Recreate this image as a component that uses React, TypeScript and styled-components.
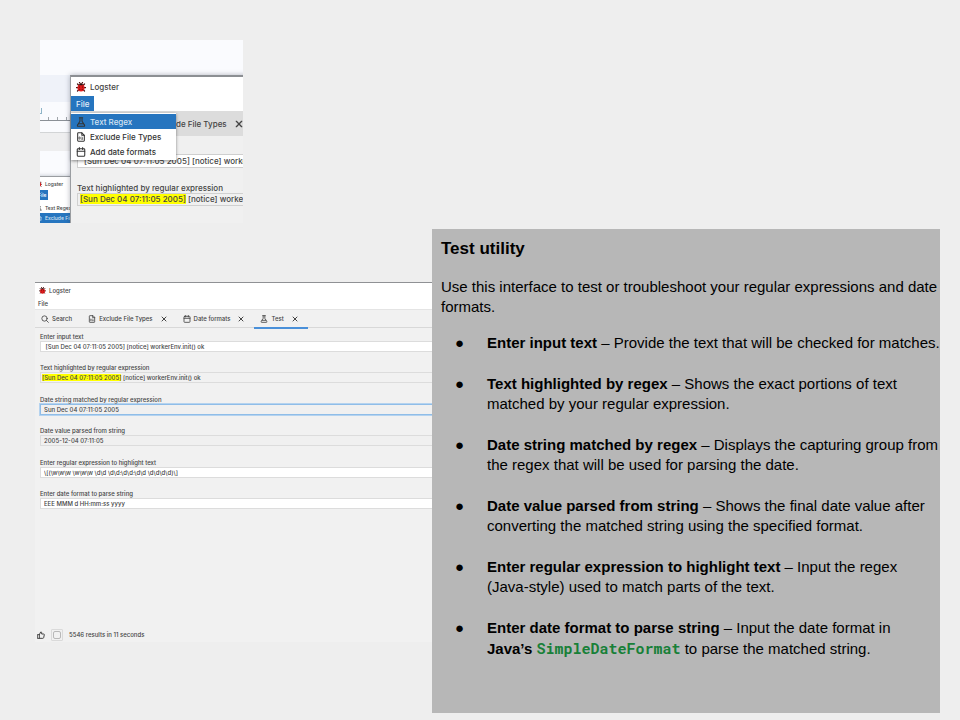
import React from 'react';
import styled, { createGlobalStyle, css } from 'styled-components';

const GlobalStyle = createGlobalStyle`
  *, *::before, *::after { box-sizing: border-box; }
  body { margin: 0; background: #eeeeee; }
  button, input { font: inherit; color: inherit; }
`;

const Page = styled.main`
  display: grid;
  grid-template-columns: 432fr 508fr;
  min-height: 100vh;
  padding-right: 20px;
  background: #eeeeee;
  color: #000;
  font-family: 'Liberation Sans', Arial, sans-serif;
`;

const Shots = styled.div`
  min-width: 0;
  padding-top: 40px;
  font-family: Inter, 'Liberation Sans', sans-serif;
  font-weight: 500;
  color: #444;
`;

/* ---------- icons ---------- */

const Svg = styled.svg<{ $size: number }>`
  display: block;
  flex: none;
  width: ${(p) => p.$size}px;
  height: ${(p) => p.$size}px;
  fill: none;
  stroke: currentColor;
  stroke-width: 2.5;
  stroke-linecap: round;
  stroke-linejoin: round;
`;

type IconProps = { size: number };

const BugIcon = ({ size }: IconProps) => (
  <Svg $size={size} viewBox="0 0 20 20" aria-hidden="true">
    <path
      d="M3 4l3 3M17 4l-3 3M1 11h4M19 11h-4M3 18l3-3M17 18l-3-3M7 1l2 3M13 1l-2 3"
      stroke="#4a1616"
      strokeWidth="2.5"
    />
    <ellipse cx="10" cy="11.500" rx="7" ry="7.500" fill="#e01b1b" stroke="none" />
    <path d="M5.500 6.500C6 3 14 3 14.500 6.500z" fill="#251313" stroke="none" />
    <g fill="#5a0d0d" stroke="none">
      <circle cx="7" cy="10" r="1.200" />
      <circle cx="13" cy="10" r="1.200" />
      <circle cx="7.500" cy="14.500" r="1.200" />
      <circle cx="12.500" cy="14.500" r="1.200" />
    </g>
  </Svg>
);

const FlaskIcon = ({ size }: IconProps) => (
  <Svg $size={size} viewBox="0 0 24 24" aria-hidden="true">
    <path d="M8 2h8M9.500 2v8L3.500 19.500Q2.500 22 5 22h14q2.500 0 1.500-2.500L14.500 10V2" />
    <path d="M6.500 16h11" />
  </Svg>
);

const FileIcon = ({ size }: IconProps) => (
  <Svg $size={size} viewBox="0 0 24 24" aria-hidden="true">
    <path d="M14 2H5.500Q4 2 4 3.500v17Q4 22 5.500 22h13q1.500 0 1.500-1.500V8z" />
    <path d="M14 2v6h6" />
    <path d="M8 12h2v5H8zM14 12h1v5M13 17h3" strokeWidth="1.500" />
  </Svg>
);

const CalendarIcon = ({ size }: IconProps) => (
  <Svg $size={size} viewBox="0 0 24 24" aria-hidden="true">
    <rect x="3" y="4" width="18" height="18" rx="2" />
    <path d="M3 10h18M8 1.500V6M16 1.500V6" />
  </Svg>
);

const SearchIcon = ({ size }: IconProps) => (
  <Svg $size={size} viewBox="0 0 24 24" aria-hidden="true">
    <circle cx="10.500" cy="10.500" r="8" />
    <path d="M16.500 16.500L22 22" />
  </Svg>
);

const CloseIcon = ({ size }: IconProps) => (
  <Svg $size={size} viewBox="0 0 24 24" aria-hidden="true">
    <path d="M4 4l16 16M20 4L4 20" strokeWidth="4" />
  </Svg>
);

const ThumbIcon = ({ size }: IconProps) => (
  <Svg $size={size} viewBox="0 0 24 24" aria-hidden="true">
    <path
      d="M2 11h5v11H2zM7 11l4-8q3-1 3 2v4h6q2 0 2 2l-2 9q-.500 2-2.500 2H7"
      strokeWidth="3"
    />
  </Svg>
);

/* ---------- desktop crop with the open File menu ---------- */

const Desktop = styled.section`
  position: relative;
  width: 203px;
  height: 183px;
  margin-left: 40px;
  overflow: hidden;
  background: #fafbfe;
  font-size: 8px;
  line-height: 10px;
`;

const DesktopBand = styled.div<{ $height: number; $color: string; $line?: boolean }>`
  height: ${(p) => p.$height}px;
  border-bottom: ${(p) => (p.$line ? '1px solid #d2d4d6' : '0')};
  background: ${(p) => p.$color};
`;

const Ruler = styled.div`
  display: flex;
  align-items: flex-end;
  height: 19px;
  border-bottom: 1px solid #8b9096;
  background: #fafbfe;
`;

const RulerSvg = styled.svg`
  display: block;
  width: 30px;
  height: 12px;
  stroke: #a0a5aa;
  fill: none;
`;

const FrontWindow = styled.div`
  position: absolute;
  top: 35px;
  left: 30px;
  width: 240px;
  height: 170px;
  border: 1px solid #9a9da1;
  border-top: 2px solid #8c8f93;
  background: #f0f0f0;
  box-shadow: 0 0 5px rgba(40, 50, 70, 0.35);
`;

const BackWindow = styled.div`
  position: absolute;
  top: 136px;
  left: -12px;
  width: 60px;
  height: 60px;
  border-top: 1px solid #9a9da1;
  background: #fff;
  box-shadow: 0 0 4px rgba(40, 50, 70, 0.3);
  font-size: 5px;
  line-height: 10px;
`;

const BackRow = styled.div<{ $active?: boolean }>`
  display: flex;
  align-items: center;
  gap: 3px;
  height: 10px;
  padding-left: 9px;
  white-space: nowrap;
  ${(p) => p.$active && css`
    background: #2675bf;
    color: #d5e4f3;
  `}
`;

const BackTitle = styled(BackRow)`
  height: 13px;
  padding-left: 8px;
`;

const BackMenu = styled.div`
  width: 20px;
  height: 10px;
  margin-bottom: 3px;
  padding-left: 10px;
  background: #2675bf;
  color: #fff;
`;

const TitleBar = styled.header<{ $large?: boolean }>`
  display: flex;
  align-items: center;
  gap: ${(p) => (p.$large ? 4 : 3)}px;
  height: ${(p) => (p.$large ? 19 : 15)}px;
  padding-left: ${(p) => (p.$large ? 5 : 4)}px;
  background: #fff;
`;

const MenuStrip = styled.div<{ $height: number }>`
  display: flex;
  align-items: stretch;
  height: ${(p) => p.$height}px;
  background: #fff;
`;

const MenuTitle = styled.button<{ $open?: boolean }>`
  padding: 0 ${(p) => (p.$open ? 5 : 3)}px;
  border: 0;
  background: ${(p) => (p.$open ? '#2675bf' : 'transparent')};
  color: ${(p) => (p.$open ? '#e2edf8' : 'inherit')};
`;

const CropTabs = styled.div`
  display: flex;
  align-items: center;
  gap: 8px;
  height: 25px;
  padding-left: 105px;
  background: #dcdcdc;
  white-space: nowrap;
`;

const CropTab = styled.button`
  padding: 0;
  border: 0;
  background: none;
`;

const Menu = styled.div`
  position: absolute;
  top: 36px;
  left: 0;
  width: 105px;
  padding: 1px 0;
  background: #fff;
  box-shadow: 0 1px 3px rgba(0, 0, 0, 0.45);
`;

const MenuItem = styled.button<{ $active?: boolean }>`
  display: flex;
  align-items: center;
  gap: 4px;
  width: 100%;
  height: 15px;
  padding: 0 5px;
  border: 0;
  background: ${(p) => (p.$active ? '#2675bf' : '#fff')};
  color: #333;
  text-align: left;
  white-space: nowrap;
`;

const MenuText = styled.span<{ $active?: boolean }>`
  color: ${(p) => (p.$active ? '#d3e3f3' : 'inherit')};
`;

const CropBody = styled.div`
  padding: 18px 0 0 6px;
`;

const CropInput = styled.input`
  display: block;
  width: 100%;
  height: 14px;
  padding: 0 6px;
  border: 1px solid #cfcfcf;
  background: #fff;
`;

const CropLabel = styled.div`
  margin-top: 15px;
  white-space: nowrap;
`;

const CropResult = styled.div`
  height: 13px;
  padding: 0 2px;
  border: 1px solid #d0d0d0;
  line-height: 11px;
  white-space: nowrap;
`;

const Mark = styled.mark`
  background: #ffff00;
  color: inherit;
`;

/* ---------- main application window ---------- */

const AppWindow = styled.section`
  display: flex;
  flex-direction: column;
  height: 360px;
  margin: 59px 0 0 35px;
  border-top: 1px solid #8f9194;
  background: #f1f1f1;
  font-size: 6px;
  line-height: 8px;
`;

const Tabs = styled.nav`
  display: flex;
  height: 19px;
  border-top: 1px solid #e4e4e4;
  border-bottom: 1px solid #d8d8d8;
`;

const Tab = styled.div<{ $active?: boolean }>`
  display: flex;
  align-items: center;
  gap: 8px;
  height: 19px;
  padding: 0 10px 0 6px;
  border-bottom: 2px solid ${(p) => (p.$active ? '#4a90d9' : 'transparent')};
`;

const TabButton = styled.button`
  display: flex;
  align-items: center;
  gap: 3px;
  padding: 0;
  border: 0;
  background: none;
  white-space: nowrap;
`;

const Fields = styled.form`
  display: flex;
  flex-direction: column;
  justify-content: space-between;
  height: 176px;
  margin-top: 5px;
  padding-left: 5px;
`;

const Field = styled.div``;

const FieldLabel = styled.label`
  display: block;
  line-height: 8px;
`;

const fieldBox = css`
  display: block;
  width: 100%;
  height: 11px;
  border: 1px solid #dcdcdc;
  border-right: 0;
  line-height: 9px;
  white-space: nowrap;
`;

const FieldInput = styled.input<{ $tone: 'edit' | 'read' | 'focus' }>`
  ${fieldBox}
  padding: 0 3px;
  outline: 0;
  background: ${(p) => (p.$tone === 'edit' ? '#fff' : '#f0f0f0')};
  ${(p) => p.$tone === 'focus' && css`
    border-color: #8fbde8;
    box-shadow: 0 0 0 1px #b5d3ef;
  `}
`;

const FieldResult = styled.output`
  ${fieldBox}
  padding: 0 1px;
`;

const StatusBar = styled.footer`
  display: flex;
  align-items: center;
  gap: 6px;
  height: 15px;
  margin-top: auto;
  padding-left: 2px;
`;

const IconButton = styled.button`
  display: flex;
  padding: 0;
  border: 0;
  background: none;
`;

const StopButton = styled(IconButton)`
  padding: 1px;
  border: 1px solid #dadada;
  border-radius: 1px;
`;

const StopMark = styled.span`
  width: 8px;
  height: 8px;
  border: 1px solid #b8b8b8;
  border-radius: 2px;
`;

/* ---------- explanation panel ---------- */

const Panel = styled.article`
  min-width: 0;
  min-height: 484px;
  margin: 229px 0 7px;
  padding: 8px 0 8px 9px;
  background: #b7b7b7;
  font-size: 15px;
  line-height: 20px;
`;

const Heading = styled.h1`
  margin: 0 0 16px;
  font-size: 17px;
  line-height: 24px;
`;

const Intro = styled.p`
  margin: 0;
`;

const List = styled.ul`
  display: flex;
  flex-direction: column;
  gap: 21px;
  margin: 16px 0 0;
  padding: 0;
  list-style: none;
`;

const Item = styled.li`
  display: grid;
  grid-template-columns: 32px 1fr;
  padding-left: 14px;

  &::before {
    content: '●';
    font-size: 15px;
  }
`;

const Code = styled.code`
  color: #188038;
  font-family: 'Roboto Mono', 'Liberation Mono', monospace;
  font-size: 15px;
  font-weight: 700;
`;

const fields: { label: string; value: string; tone: 'edit' | 'read' | 'focus' | 'mark' }[] = [
  { label: 'Enter input text', value: ' [Sun Dec 04 07:11:05 2005] [notice] workerEnv.init() ok', tone: 'edit' },
  { label: 'Text highlighted by regular expression', value: '', tone: 'mark' },
  { label: 'Date string matched by regular expression', value: 'Sun Dec 04 07:11:05 2005', tone: 'focus' },
  { label: 'Date value parsed from string', value: '2005-12-04 07:11:05', tone: 'read' },
  {
    label: 'Enter regular expression to highlight text',
    value: '\\[(\\w\\w\\w \\w\\w\\w \\d\\d \\d\\d:\\d\\d:\\d\\d \\d\\d\\d\\d)\\]',
    tone: 'edit',
  },
  { label: 'Enter date format to parse string', value: 'EEE MMM d HH:mm:ss yyyy', tone: 'edit' },
];

const tabs = [
  { name: 'Search', Icon: SearchIcon, closable: false },
  { name: 'Exclude File Types', Icon: FileIcon, closable: true },
  { name: 'Date formats', Icon: CalendarIcon, closable: true },
  { name: 'Test', Icon: FlaskIcon, closable: true },
];

const menuItems = [
  { name: 'Text Regex', Icon: FlaskIcon },
  { name: 'Exclude File Types', Icon: FileIcon },
  { name: 'Add date formats', Icon: CalendarIcon },
];

const notes = [
  { term: 'Enter input text', text: 'Provide the text that will be checked for matches.' },
  {
    term: 'Text highlighted by regex',
    text: 'Shows the exact portions of text matched by your regular expression.',
  },
  {
    term: 'Date string matched by regex',
    text: 'Displays the capturing group from the regex that will be used for parsing the date.',
  },
  {
    term: 'Date value parsed from string',
    text: 'Shows the final date value after converting the matched string using the specified format.',
  },
  {
    term: 'Enter regular expression to highlight text',
    text: 'Input the regex (Java-style) used to match parts of the text.',
  },
];

const MenuShot = () => (
  <Desktop>
    <DesktopBand $height={35} $color="#fafbfe" />
    <DesktopBand $height={27} $color="#eff2f9" />
    <Ruler>
      <RulerSvg viewBox="0 0 30 12">
        <path d="M1.500 0v5M0 5.500h2" stroke="#8fb5c8" />
        <path d="M8.500 9v3M17.500 9v3M26.500 9v3" />
      </RulerSvg>
    </Ruler>
    <DesktopBand $height={12} $color="#fafbfe" $line />
    <DesktopBand $height={18} $color="#eeeeef" />
    <BackWindow>
      <BackTitle>
        <BugIcon size={6} />
        Logster
      </BackTitle>
      <BackMenu>File</BackMenu>
      <BackRow>
        <FlaskIcon size={5} />
        Text Regex
      </BackRow>
      <BackRow $active>
        <FileIcon size={5} />
        Exclude File
      </BackRow>
    </BackWindow>
    <FrontWindow>
      <TitleBar $large>
        <BugIcon size={10} />
        Logster
      </TitleBar>
      <MenuStrip $height={15}>
        <MenuTitle $open>File</MenuTitle>
      </MenuStrip>
      <CropTabs>
        <CropTab>de File Types</CropTab>
        <IconButton aria-label="Close tab">
          <CloseIcon size={8} />
        </IconButton>
      </CropTabs>
      <CropBody>
        <CropInput aria-label="Input text" defaultValue="[Sun Dec 04 07:11:05 2005] [notice] workerEnv.init() ok" />
        <CropLabel>Text highlighted by regular expression</CropLabel>
        <CropResult>
          <Mark>[Sun Dec 04 07:11:05 2005]</Mark> [notice] workerEnv.init() ok
        </CropResult>
      </CropBody>
      <Menu role="menu">
        {menuItems.map(({ name, Icon }, i) => (
          <MenuItem key={name} role="menuitem" $active={i === 0}>
            <Icon size={10} />
            <MenuText $active={i === 0}>{name}</MenuText>
          </MenuItem>
        ))}
      </Menu>
    </FrontWindow>
  </Desktop>
);

const LogsterWindow = () => (
  <AppWindow>
    <TitleBar>
      <BugIcon size={7} />
      Logster
    </TitleBar>
    <MenuStrip $height={11}>
      <MenuTitle>File</MenuTitle>
    </MenuStrip>
    <Tabs>
      {tabs.map(({ name, Icon, closable }) => (
        <Tab key={name} $active={name === 'Test'}>
          <TabButton>
            <Icon size={8} />
            {name}
          </TabButton>
          {closable && (
            <IconButton aria-label={`Close ${name}`}>
              <CloseIcon size={6} />
            </IconButton>
          )}
        </Tab>
      ))}
    </Tabs>
    <Fields>
      {fields.map(({ label, value, tone }, i) => (
        <Field key={label}>
          <FieldLabel htmlFor={`field-${i}`}>{label}</FieldLabel>
          {tone === 'mark' ? (
            <FieldResult id={`field-${i}`}>
              <Mark>[Sun Dec 04 07:11:05 2005]</Mark> [notice] workerEnv.init() ok
            </FieldResult>
          ) : (
            <FieldInput id={`field-${i}`} $tone={tone} defaultValue={value} readOnly={tone !== 'edit'} />
          )}
        </Field>
      ))}
    </Fields>
    <StatusBar>
      <IconButton aria-label="Status">
        <ThumbIcon size={8} />
      </IconButton>
      <StopButton aria-label="Stop">
        <StopMark />
      </StopButton>
      <span>5546 results in 11 seconds</span>
    </StatusBar>
  </AppWindow>
);

export default function App() {
  return (
    <>
      <GlobalStyle />
      <Page>
        <Shots>
          <MenuShot />
          <LogsterWindow />
        </Shots>
        <Panel>
          <Heading>Test utility</Heading>
          <Intro>Use this interface to test or troubleshoot your regular expressions and date formats.</Intro>
          <List>
            {notes.map(({ term, text }) => (
              <Item key={term}>
                <div>
                  <strong>{term}</strong> – {text}
                </div>
              </Item>
            ))}
            <Item>
              <div>
                <strong>Enter date format to parse string</strong> – Input the date format in
                <br />
                <strong>Java’s</strong> <Code>SimpleDateFormat</Code> to parse the matched string.
              </div>
            </Item>
          </List>
        </Panel>
      </Page>
    </>
  );
}
